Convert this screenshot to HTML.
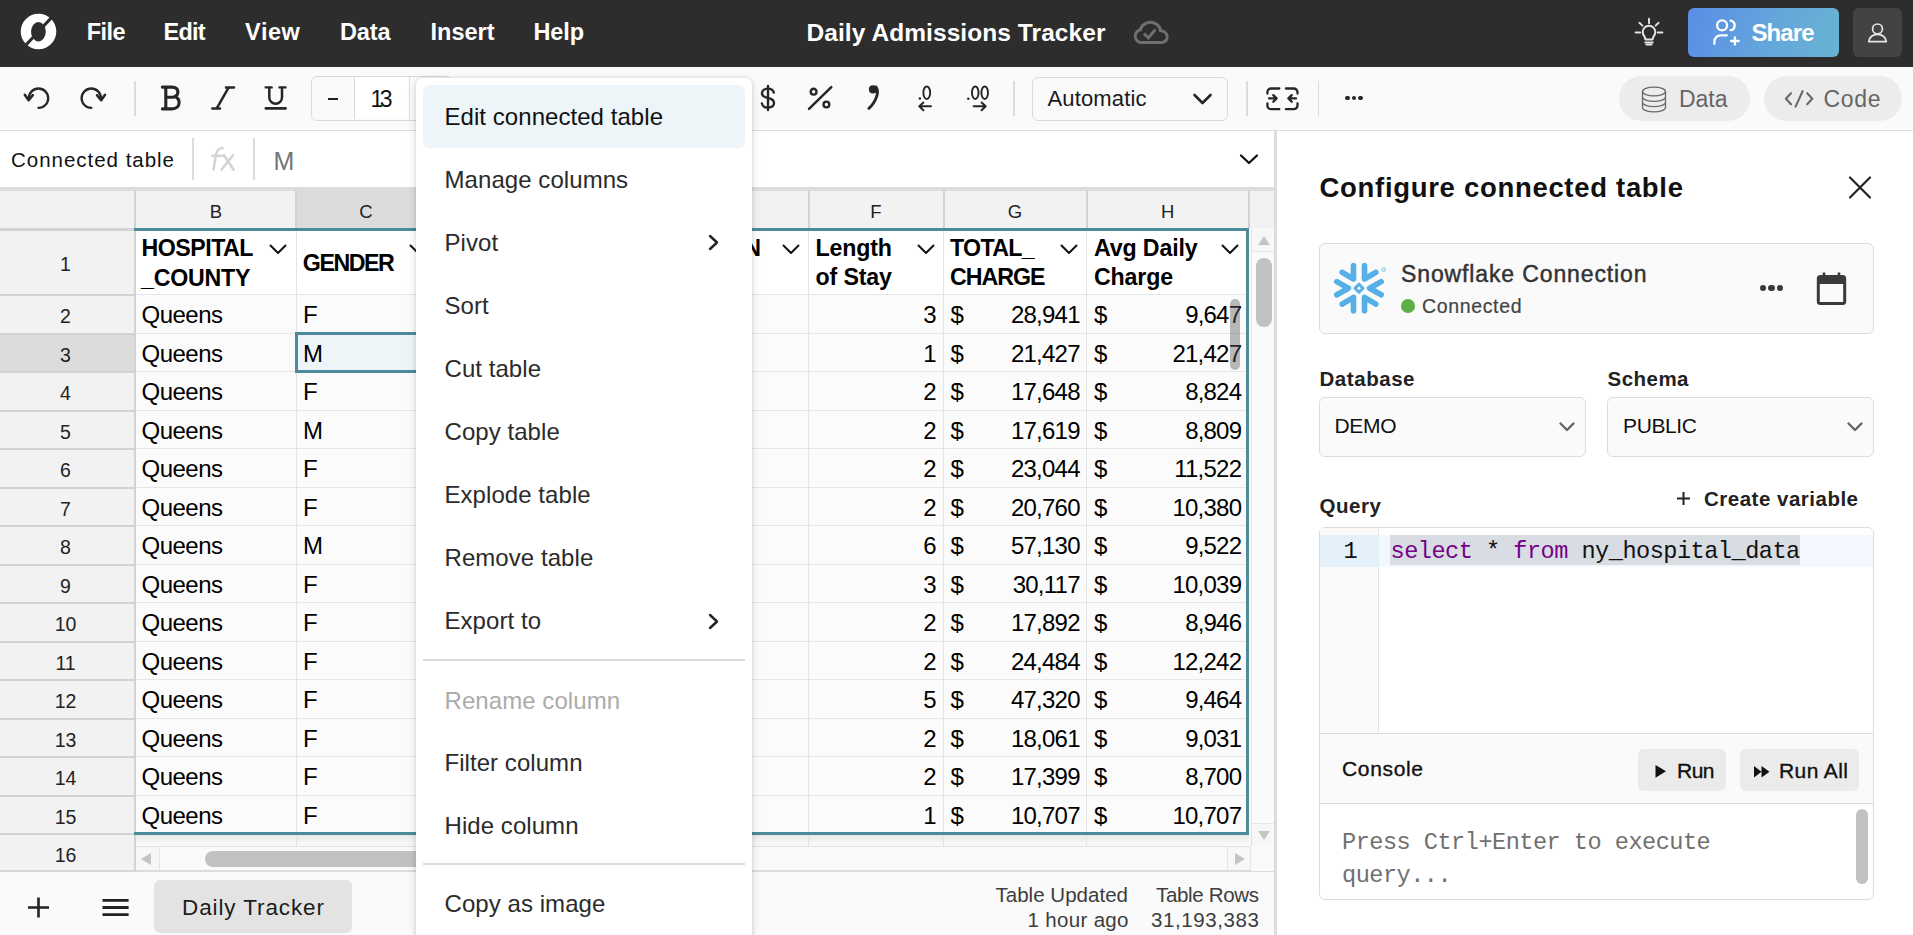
<!DOCTYPE html>
<html><head><meta charset="utf-8"><title>Daily Admissions Tracker</title>
<style>
html,body{margin:0;padding:0;}
body{width:1913px;height:935px;overflow:hidden;position:relative;background:#fff;font-family:"Liberation Sans", sans-serif;}
.r{position:absolute;display:block;}
.t{position:absolute;white-space:nowrap;}
</style></head><body>
<div class="r" style="left:0px;top:0px;width:1913px;height:67px;background:#2d2d2d;"></div>
<svg class="r" style="left:20px;top:13px;" width="37" height="37" viewBox="0 0 37 37" fill="none"><circle cx="18.5" cy="18.5" r="17.8" fill="#fff"/><ellipse cx="18.4" cy="18.75" rx="7.4" ry="9.7" fill="#2d2d2d"/><line x1="5" y1="33" x2="32.5" y2="3.5" stroke="#2d2d2d" stroke-width="3.2"/></svg>
<div class="t" style="left:86.80px;top:20.91px;font-size:23.5px;line-height:23.5px;font-family:'Liberation Sans', sans-serif;color:#fff;font-weight:bold;letter-spacing:-0.594px;">File</div>
<div class="t" style="left:163.50px;top:20.91px;font-size:23.5px;line-height:23.5px;font-family:'Liberation Sans', sans-serif;color:#fff;font-weight:bold;letter-spacing:-0.795px;">Edit</div>
<div class="t" style="left:245.10px;top:20.91px;font-size:23.5px;line-height:23.5px;font-family:'Liberation Sans', sans-serif;color:#fff;font-weight:bold;letter-spacing:0.557px;">View</div>
<div class="t" style="left:339.90px;top:20.91px;font-size:23.5px;line-height:23.5px;font-family:'Liberation Sans', sans-serif;color:#fff;font-weight:bold;letter-spacing:-0.113px;">Data</div>
<div class="t" style="left:430.50px;top:20.91px;font-size:23.5px;line-height:23.5px;font-family:'Liberation Sans', sans-serif;color:#fff;font-weight:bold;">Insert</div>
<div class="t" style="left:533.50px;top:20.91px;font-size:23.5px;line-height:23.5px;font-family:'Liberation Sans', sans-serif;color:#fff;font-weight:bold;letter-spacing:-0.142px;">Help</div>
<div class="t" style="left:806.50px;top:20.66px;font-size:24.5px;line-height:24.5px;font-family:'Liberation Sans', sans-serif;color:#fff;font-weight:bold;letter-spacing:0.073px;">Daily Admissions Tracker</div>
<svg class="r" style="left:1132px;top:19px;" width="38" height="28" viewBox="0 0 38 28" fill="none"><clipPath id="cclip"><rect x="0" y="0" width="38" height="25.1"/></clipPath><clipPath id="cclip2"><rect x="0" y="0" width="38" height="22.1"/></clipPath><g fill="#6f6f6f" clip-path="url(#cclip)"><circle cx="18.4" cy="13.9" r="12.1"/><circle cx="29.4" cy="17.8" r="7.3"/><circle cx="9.6" cy="17.2" r="7.9"/><rect x="9.6" y="17.2" width="19.8" height="7.9"/></g><g fill="#2d2d2d" clip-path="url(#cclip2)"><circle cx="18.4" cy="13.9" r="9.1"/><circle cx="29.4" cy="17.8" r="4.3"/><circle cx="9.6" cy="17.2" r="4.9"/><rect x="9.6" y="13" width="19.8" height="9.1"/></g><path d="M12 14.6 L16.3 18.9 L23.4 10.6" stroke="#6f6f6f" stroke-width="3"/></svg>
<svg class="r" style="left:1634px;top:17px;" width="30" height="30" viewBox="0 0 30 30" fill="none"><path d="M11.4 22.4 L10.55 19.55 A6.3 6.3 0 1 1 19.45 19.55 L18.6 22.4 Z" stroke="#e4e4e4" stroke-width="2" stroke-linejoin="round"/><path d="M11.2 25.5 H18.8 M12.4 27.7 H17.6" stroke="#e4e4e4" stroke-width="1.8" stroke-linecap="round"/><path d="M15 1.6 V6.2 M5.4 5.8 L8.4 8.6 M24.6 5.8 L21.6 8.6 M1.6 15.5 H6.3 M23.7 15.5 H28.4" stroke="#e4e4e4" stroke-width="1.9" stroke-linecap="round"/></svg>
<div class="r" style="left:1688px;top:8px;width:151px;height:49px;border-radius:6px;background:linear-gradient(110deg,#5a8de6 0%,#64a6db 55%,#67b4d2 100%);"></div>
<svg class="r" style="left:1712px;top:18px;" width="30" height="30" viewBox="0 0 30 30" fill="none"><circle cx="10.1" cy="7.4" r="4.95" stroke="#fff" stroke-width="2.3"/><path d="M18.7 2.6 a4.9 4.9 0 0 1 0 9.6" stroke="#fff" stroke-width="2.3" stroke-linecap="round"/><path d="M2.4 25.8 v-2.3 a6.2 6.2 0 0 1 6.2-6.2 h6.2" stroke="#fff" stroke-width="2.3" stroke-linecap="round"/><path d="M22.9 19.3 V26.7 M19.1 23 H26.7" stroke="#fff" stroke-width="2.3" stroke-linecap="round"/></svg>
<div class="t" style="left:1751.50px;top:20.58px;font-size:24px;line-height:24px;font-family:'Liberation Sans', sans-serif;color:#fff;font-weight:bold;letter-spacing:-0.926px;">Share</div>
<div class="r" style="left:1853px;top:8px;width:49px;height:49px;background:#434343;border-radius:6px;"></div>
<svg class="r" style="left:1866px;top:22px;" width="24" height="22" viewBox="0 0 24 22" fill="none"><circle cx="11.5" cy="6.9" r="4.9" stroke="#e6e6e6" stroke-width="1.7"/><path d="M2.7 19.6 c0.9-4.6 4.4-7.2 8.8-7.2 s7.9 2.6 8.8 7.2 z" stroke="#e6e6e6" stroke-width="1.7" stroke-linejoin="round"/></svg>
<div class="r" style="left:0px;top:67px;width:1913px;height:63px;background:#fafafa;"></div>
<div class="r" style="left:0px;top:130px;width:1913px;height:1px;background:#dedede;"></div>
<svg class="r" style="left:22px;top:85px;" width="30" height="26" viewBox="0 0 30 26" fill="none"><path d="M16.5 22.9 A9.7 9.7 0 1 0 6.8 13.2" stroke="#262626" stroke-width="2.3" stroke-linecap="round"/><path d="M2.8 9.8 L6.6 15.3 L10.8 10.1" stroke="#262626" stroke-width="2.5" stroke-linecap="round" stroke-linejoin="round"/></svg>
<svg class="r" style="left:78px;top:85px;" width="30" height="26" viewBox="0 0 30 26" fill="none"><path d="M13.3 22.9 A9.7 9.7 0 1 1 23 13.2" stroke="#262626" stroke-width="2.3" stroke-linecap="round"/><path d="M27 9.8 L23.2 15.3 L19 10.1" stroke="#262626" stroke-width="2.5" stroke-linecap="round" stroke-linejoin="round"/></svg>
<div class="r" style="left:134px;top:81px;width:2px;height:35px;background:#dcdcdc;"></div>
<svg class="r" style="left:158px;top:83px;" width="26" height="30" viewBox="0 0 26 30" fill="none"><path d="M4.4 4.1 H13.6 C17.6 4.1 19.9 6.1 19.9 9.1 C19.9 11.4 18.6 13 16.6 13.8 C19.3 14.4 21.1 16.5 21.1 19.6 C21.1 23.5 18.4 25.9 14 25.9 H4.4" stroke="#262626" stroke-width="3.1" stroke-linecap="round" stroke-linejoin="round"/><path d="M7.8 4.1 V25.9 M7.8 14.2 H16" stroke="#262626" stroke-width="3.1"/></svg>
<svg class="r" style="left:208px;top:83px;" width="30" height="30" viewBox="0 0 30 30" fill="none"><path d="M8.6 25.6 L20.7 4.4" stroke="#262626" stroke-width="2.5"/><path d="M18 4.4 H26 M4.3 25.6 H12" stroke="#262626" stroke-width="2.5" stroke-linecap="round"/></svg>
<svg class="r" style="left:261px;top:83px;" width="30" height="30" viewBox="0 0 30 30" fill="none"><path d="M8.3 4.4 V14.5 A6.35 6.35 0 0 0 21 14.5 V4.4" stroke="#262626" stroke-width="2.5"/><path d="M4.7 4.4 H10.7 M18.5 4.4 H24.5" stroke="#262626" stroke-width="2.4" stroke-linecap="round"/><path d="M4.9 25.4 H24.5" stroke="#262626" stroke-width="2.7" stroke-linecap="round"/></svg>
<div class="r" style="left:311px;top:76px;width:141px;height:45px;background:#fafafa;box-sizing:border-box;border:1px solid #dadada;border-radius:6px;"></div>
<div class="r" style="left:355px;top:77px;width:54px;height:42px;background:#ffffff;"></div>
<div class="r" style="left:354px;top:77px;width:1px;height:42px;background:#dadada;"></div>
<div class="r" style="left:409px;top:77px;width:1px;height:42px;background:#dadada;"></div>
<div class="r" style="left:328px;top:98px;width:10px;height:2.2px;background:#222;"></div>
<div class="t" style="left:370.50px;top:88.13px;font-size:23px;line-height:23px;font-family:'Liberation Sans', sans-serif;color:#111;letter-spacing:-3.584px;">13</div>
<svg class="r" style="left:758px;top:84px;" width="20" height="28" viewBox="0 0 20 28" fill="none"><path d="M15.8 8.6 C15.2 6 12.9 4.6 9.9 4.6 C6.4 4.6 4 6.5 4 9.3 C4 12.2 6.6 13.3 10 14 C13.6 14.7 16 15.9 16 19.1 C16 21.9 13.5 23.6 10 23.6 C6.6 23.6 4.3 22 3.9 19.4" stroke="#262626" stroke-width="2.4" stroke-linecap="round"/><path d="M10 2 V26" stroke="#262626" stroke-width="2.4" stroke-linecap="round"/></svg>
<svg class="r" style="left:805px;top:84px;" width="30" height="28" viewBox="0 0 30 28" fill="none"><path d="M4 24.8 L26.3 3.1" stroke="#262626" stroke-width="2.5" stroke-linecap="round"/><circle cx="8.6" cy="7.7" r="2.9" stroke="#262626" stroke-width="2.4"/><circle cx="21.4" cy="20.5" r="2.9" stroke="#262626" stroke-width="2.4"/></svg>
<svg class="r" style="left:864px;top:83px;" width="18" height="28" viewBox="0 0 18 28" fill="none"><circle cx="9" cy="6.4" r="4.1" fill="#262626"/><path d="M11.9 4 C13.8 6.5 13.9 9.8 12.6 13.6 C11.5 17 9.3 21.4 4.9 25.3" stroke="#262626" stroke-width="2.9" stroke-linecap="round"/></svg>
<svg class="r" style="left:915px;top:83px;" width="20" height="30" viewBox="0 0 20 30" fill="none"><circle cx="4.9" cy="15.6" r="1.25" fill="#262626"/><ellipse cx="11.75" cy="9.7" rx="3.4" ry="6.25" stroke="#262626" stroke-width="1.9"/><path d="M16 23.3 H4.6 M8.4 19.6 L4.3 23.3 L8.4 27.2" stroke="#262626" stroke-width="2" stroke-linecap="round" stroke-linejoin="round"/></svg>
<svg class="r" style="left:965px;top:83px;" width="26" height="30" viewBox="0 0 26 30" fill="none"><circle cx="3.3" cy="15.8" r="1.25" fill="#262626"/><ellipse cx="10.25" cy="9.7" rx="3.3" ry="6.25" stroke="#262626" stroke-width="1.9"/><ellipse cx="19.7" cy="9.7" rx="3.3" ry="6.25" stroke="#262626" stroke-width="1.9"/><path d="M8.7 23.3 H20.6 M16.6 19.6 L20.7 23.3 L16.6 27.2" stroke="#262626" stroke-width="2" stroke-linecap="round" stroke-linejoin="round"/></svg>
<div class="r" style="left:1013px;top:81px;width:2px;height:35px;background:#dcdcdc;"></div>
<div class="r" style="left:1032px;top:77px;width:196px;height:44px;background:#fafafa;box-sizing:border-box;border:1px solid #dadada;border-radius:6px;"></div>
<div class="t" style="left:1047.50px;top:87.98px;font-size:22px;line-height:22px;font-family:'Liberation Sans', sans-serif;color:#1a1a1a;letter-spacing:0.147px;">Automatic</div>
<svg class="r" style="left:1192px;top:92px;" width="21" height="14" viewBox="0 0 21 14" fill="none"><path d="M2.5 3 L10.5 11 L18.5 3" stroke="#262626" stroke-width="2.6" stroke-linecap="round" stroke-linejoin="round"/></svg>
<div class="r" style="left:1246px;top:81px;width:2px;height:35px;background:#dcdcdc;"></div>
<svg class="r" style="left:1264px;top:85px;" width="38" height="28" viewBox="0 0 38 28" fill="none"><path d="M15.3 3.5 H7.2 a3.8 3.8 0 0 0 -3.8 3.8 V8.5 M21.9 3.5 H29.7 a3.8 3.8 0 0 1 3.8 3.8 V8.5 M15.3 24.2 H7.2 a3.8 3.8 0 0 1 -3.8 -3.8 V18.3 M21.9 24.2 H29.7 a3.8 3.8 0 0 0 3.8 -3.8 V18.3" stroke="#262626" stroke-width="2.3" stroke-linecap="round"/><path d="M5 13.4 H12.6 M9.3 10.1 L12.6 13.4 L9.3 16.7 M32 13.4 H24.4 M27.7 10.1 L24.4 13.4 L27.7 16.7" stroke="#262626" stroke-width="2.3" stroke-linecap="round" stroke-linejoin="round"/></svg>
<div class="r" style="left:1318px;top:81px;width:1px;height:35px;background:#dcdcdc;"></div>
<div class="r" style="left:1345.2px;top:95.8px;width:4.6px;height:4.6px;background:#262626;border-radius:50%;"></div>
<div class="r" style="left:1351.8px;top:95.8px;width:4.6px;height:4.6px;background:#262626;border-radius:50%;"></div>
<div class="r" style="left:1358.4px;top:95.8px;width:4.6px;height:4.6px;background:#262626;border-radius:50%;"></div>
<div class="r" style="left:1619px;top:76px;width:131px;height:45px;background:#ececec;border-radius:23px;"></div>
<svg class="r" style="left:1640px;top:85.6px;" width="28" height="28" viewBox="0 0 28 28" fill="none"><ellipse cx="14" cy="5.5" rx="11.5" ry="4.3" stroke="#6a6a6a" stroke-width="1.3"/><path d="M2.5 5.5 V21.5 c0 2.4 5.1 4.3 11.5 4.3 s11.5-1.9 11.5-4.3 V5.5 M2.5 11 c0 2.4 5.1 4.3 11.5 4.3 s11.5-1.9 11.5-4.3 M2.5 16.3 c0 2.4 5.1 4.3 11.5 4.3 s11.5-1.9 11.5-4.3" stroke="#6a6a6a" stroke-width="1.3"/></svg>
<div class="t" style="left:1679.00px;top:87.93px;font-size:23px;line-height:23px;font-family:'Liberation Sans', sans-serif;color:#666;letter-spacing:-0.028px;">Data</div>
<div class="r" style="left:1764px;top:76px;width:138px;height:45px;background:#ececec;border-radius:23px;"></div>
<svg class="r" style="left:1783px;top:88px;" width="33" height="22" viewBox="0 0 33 22" fill="none"><path d="M8 5.2 L2.9 10.8 L8 16.3 M24.2 5.2 L29.3 10.8 L24.2 16.3 M19.6 3.2 L12.6 18.6" stroke="#6a6a6a" stroke-width="2.1" stroke-linecap="round" stroke-linejoin="round"/></svg>
<div class="t" style="left:1823.50px;top:87.93px;font-size:23px;line-height:23px;font-family:'Liberation Sans', sans-serif;color:#666;letter-spacing:0.671px;">Code</div>
<div class="r" style="left:0px;top:131px;width:1274px;height:56px;background:#ffffff;"></div>
<div class="t" style="left:11.00px;top:150.05px;font-size:20.5px;line-height:20.5px;font-family:'Liberation Sans', sans-serif;color:#111;letter-spacing:0.978px;">Connected table</div>
<div class="r" style="left:192px;top:138px;width:2px;height:42px;background:#dddddd;"></div>
<svg class="r" style="left:208px;top:144px;" width="30" height="30" viewBox="0 0 30 30" fill="none"><path d="M5.3 26.5 L8.1 10.2 C8.8 6 10.9 4 15.6 4" stroke="#d4d4d4" stroke-width="2.5"/><path d="M3.3 11.8 H16.3" stroke="#d4d4d4" stroke-width="2.5"/><path d="M12.8 26.5 L25.6 10.5 M15.4 10.5 L26.2 26.5" stroke="#d4d4d4" stroke-width="2.6"/></svg>
<div class="r" style="left:253px;top:138px;width:2px;height:42px;background:#dddddd;"></div>
<div class="t" style="left:273.50px;top:149.44px;font-size:25px;line-height:25px;font-family:'Liberation Sans', sans-serif;color:#747474;">M</div>
<svg class="r" style="left:1238px;top:152px;" width="22" height="15" viewBox="0 0 22 15" fill="none"><path d="M3 3.5 L11 11 L19 3.5" stroke="#111" stroke-width="2.3" stroke-linecap="round" stroke-linejoin="round"/></svg>
<div class="r" style="left:0px;top:187px;width:1274px;height:4px;background:#dcdcdc;"></div>
<div class="r" style="left:0px;top:191px;width:1274px;height:37px;background:#f2f2f2;"></div>
<div class="r" style="left:296px;top:191px;width:120px;height:37px;background:#dcdcdc;"></div>
<div class="r" style="left:134px;top:191px;width:2px;height:37px;background:#d2d2d2;"></div>
<div class="r" style="left:295px;top:191px;width:2px;height:37px;background:#d2d2d2;"></div>
<div class="r" style="left:808px;top:191px;width:2px;height:37px;background:#d2d2d2;"></div>
<div class="r" style="left:943px;top:191px;width:2px;height:37px;background:#d2d2d2;"></div>
<div class="r" style="left:1086px;top:191px;width:2px;height:37px;background:#d2d2d2;"></div>
<div class="r" style="left:1248px;top:191px;width:2px;height:37px;background:#d2d2d2;"></div>
<div class="t" style="left:209.83px;top:202.64px;font-size:18.5px;line-height:18.5px;font-family:'Liberation Sans', sans-serif;color:#222;">B</div>
<div class="t" style="left:359.32px;top:202.64px;font-size:18.5px;line-height:18.5px;font-family:'Liberation Sans', sans-serif;color:#222;">C</div>
<div class="t" style="left:870.35px;top:202.64px;font-size:18.5px;line-height:18.5px;font-family:'Liberation Sans', sans-serif;color:#222;">F</div>
<div class="t" style="left:1007.81px;top:202.64px;font-size:18.5px;line-height:18.5px;font-family:'Liberation Sans', sans-serif;color:#222;">G</div>
<div class="t" style="left:1160.92px;top:202.64px;font-size:18.5px;line-height:18.5px;font-family:'Liberation Sans', sans-serif;color:#222;">H</div>
<div class="r" style="left:0px;top:228px;width:134px;height:3px;background:#d4d4d4;"></div>
<div class="r" style="left:0px;top:231px;width:134px;height:64.0px;background:#f2f2f2;"></div>
<div class="r" style="left:0px;top:295.0px;width:134px;height:38.5px;background:#f2f2f2;"></div>
<div class="r" style="left:0px;top:333.5px;width:134px;height:38.5px;background:#dcdcdc;"></div>
<div class="r" style="left:0px;top:372.0px;width:134px;height:38.5px;background:#f2f2f2;"></div>
<div class="r" style="left:0px;top:410.5px;width:134px;height:38.5px;background:#f2f2f2;"></div>
<div class="r" style="left:0px;top:449.0px;width:134px;height:38.5px;background:#f2f2f2;"></div>
<div class="r" style="left:0px;top:487.5px;width:134px;height:38.5px;background:#f2f2f2;"></div>
<div class="r" style="left:0px;top:526.0px;width:134px;height:38.5px;background:#f2f2f2;"></div>
<div class="r" style="left:0px;top:564.5px;width:134px;height:38.5px;background:#f2f2f2;"></div>
<div class="r" style="left:0px;top:603.0px;width:134px;height:38.5px;background:#f2f2f2;"></div>
<div class="r" style="left:0px;top:641.5px;width:134px;height:38.5px;background:#f2f2f2;"></div>
<div class="r" style="left:0px;top:680.0px;width:134px;height:38.5px;background:#f2f2f2;"></div>
<div class="r" style="left:0px;top:718.5px;width:134px;height:38.5px;background:#f2f2f2;"></div>
<div class="r" style="left:0px;top:757.0px;width:134px;height:38.5px;background:#f2f2f2;"></div>
<div class="r" style="left:0px;top:795.5px;width:134px;height:38.5px;background:#f2f2f2;"></div>
<div class="r" style="left:0px;top:834.0px;width:134px;height:37.0px;background:#f2f2f2;"></div>
<div class="r" style="left:0px;top:294.0px;width:134px;height:2px;background:#d2d2d2;"></div>
<div class="r" style="left:0px;top:332.5px;width:134px;height:2px;background:#d2d2d2;"></div>
<div class="r" style="left:0px;top:371.0px;width:134px;height:2px;background:#d2d2d2;"></div>
<div class="r" style="left:0px;top:409.5px;width:134px;height:2px;background:#d2d2d2;"></div>
<div class="r" style="left:0px;top:448.0px;width:134px;height:2px;background:#d2d2d2;"></div>
<div class="r" style="left:0px;top:486.5px;width:134px;height:2px;background:#d2d2d2;"></div>
<div class="r" style="left:0px;top:525.0px;width:134px;height:2px;background:#d2d2d2;"></div>
<div class="r" style="left:0px;top:563.5px;width:134px;height:2px;background:#d2d2d2;"></div>
<div class="r" style="left:0px;top:602.0px;width:134px;height:2px;background:#d2d2d2;"></div>
<div class="r" style="left:0px;top:640.5px;width:134px;height:2px;background:#d2d2d2;"></div>
<div class="r" style="left:0px;top:679.0px;width:134px;height:2px;background:#d2d2d2;"></div>
<div class="r" style="left:0px;top:717.5px;width:134px;height:2px;background:#d2d2d2;"></div>
<div class="r" style="left:0px;top:756.0px;width:134px;height:2px;background:#d2d2d2;"></div>
<div class="r" style="left:0px;top:794.5px;width:134px;height:2px;background:#d2d2d2;"></div>
<div class="r" style="left:0px;top:833.0px;width:134px;height:2px;background:#d2d2d2;"></div>
<div class="r" style="left:134px;top:228px;width:2px;height:643px;background:#d2d2d2;"></div>
<div class="t" style="left:60.08px;top:254.89px;font-size:19.5px;line-height:19.5px;font-family:'Liberation Sans', sans-serif;color:#222;">1</div>
<div class="t" style="left:60.08px;top:307.29px;font-size:19.5px;line-height:19.5px;font-family:'Liberation Sans', sans-serif;color:#222;">2</div>
<div class="t" style="left:60.08px;top:345.79px;font-size:19.5px;line-height:19.5px;font-family:'Liberation Sans', sans-serif;color:#222;">3</div>
<div class="t" style="left:60.08px;top:384.29px;font-size:19.5px;line-height:19.5px;font-family:'Liberation Sans', sans-serif;color:#222;">4</div>
<div class="t" style="left:60.08px;top:422.79px;font-size:19.5px;line-height:19.5px;font-family:'Liberation Sans', sans-serif;color:#222;">5</div>
<div class="t" style="left:60.08px;top:461.29px;font-size:19.5px;line-height:19.5px;font-family:'Liberation Sans', sans-serif;color:#222;">6</div>
<div class="t" style="left:60.08px;top:499.79px;font-size:19.5px;line-height:19.5px;font-family:'Liberation Sans', sans-serif;color:#222;">7</div>
<div class="t" style="left:60.08px;top:538.29px;font-size:19.5px;line-height:19.5px;font-family:'Liberation Sans', sans-serif;color:#222;">8</div>
<div class="t" style="left:60.08px;top:576.79px;font-size:19.5px;line-height:19.5px;font-family:'Liberation Sans', sans-serif;color:#222;">9</div>
<div class="t" style="left:54.65px;top:615.29px;font-size:19.5px;line-height:19.5px;font-family:'Liberation Sans', sans-serif;color:#222;">10</div>
<div class="t" style="left:55.38px;top:653.79px;font-size:19.5px;line-height:19.5px;font-family:'Liberation Sans', sans-serif;color:#222;">11</div>
<div class="t" style="left:54.65px;top:692.29px;font-size:19.5px;line-height:19.5px;font-family:'Liberation Sans', sans-serif;color:#222;">12</div>
<div class="t" style="left:54.65px;top:730.79px;font-size:19.5px;line-height:19.5px;font-family:'Liberation Sans', sans-serif;color:#222;">13</div>
<div class="t" style="left:54.65px;top:769.29px;font-size:19.5px;line-height:19.5px;font-family:'Liberation Sans', sans-serif;color:#222;">14</div>
<div class="t" style="left:54.65px;top:807.79px;font-size:19.5px;line-height:19.5px;font-family:'Liberation Sans', sans-serif;color:#222;">15</div>
<div class="t" style="left:54.65px;top:846.29px;font-size:19.5px;line-height:19.5px;font-family:'Liberation Sans', sans-serif;color:#222;">16</div>
<div class="r" style="left:136px;top:231px;width:1113px;height:64px;background:#ffffff;"></div>
<div class="r" style="left:136px;top:295px;width:1113px;height:540px;background:#fbfbfb;"></div>
<div class="r" style="left:136px;top:835px;width:1115px;height:11px;background:linear-gradient(#e8e8e8,#f8f8f8 80%);"></div>
<div class="r" style="left:295.5px;top:835px;width:1px;height:11px;background:#dcdcdc;"></div>
<div class="r" style="left:808px;top:835px;width:1px;height:11px;background:#dcdcdc;"></div>
<div class="r" style="left:943px;top:835px;width:1px;height:11px;background:#dcdcdc;"></div>
<div class="r" style="left:1086px;top:835px;width:1px;height:11px;background:#dcdcdc;"></div>
<div class="r" style="left:136px;top:294px;width:1110px;height:1px;background:#e6e6e6;"></div>
<div class="r" style="left:136px;top:333px;width:1110px;height:1px;background:#e6e6e6;"></div>
<div class="r" style="left:136px;top:371px;width:1110px;height:1px;background:#e6e6e6;"></div>
<div class="r" style="left:136px;top:410px;width:1110px;height:1px;background:#e6e6e6;"></div>
<div class="r" style="left:136px;top:448px;width:1110px;height:1px;background:#e6e6e6;"></div>
<div class="r" style="left:136px;top:487px;width:1110px;height:1px;background:#e6e6e6;"></div>
<div class="r" style="left:136px;top:525px;width:1110px;height:1px;background:#e6e6e6;"></div>
<div class="r" style="left:136px;top:564px;width:1110px;height:1px;background:#e6e6e6;"></div>
<div class="r" style="left:136px;top:602px;width:1110px;height:1px;background:#e6e6e6;"></div>
<div class="r" style="left:136px;top:641px;width:1110px;height:1px;background:#e6e6e6;"></div>
<div class="r" style="left:136px;top:679px;width:1110px;height:1px;background:#e6e6e6;"></div>
<div class="r" style="left:136px;top:718px;width:1110px;height:1px;background:#e6e6e6;"></div>
<div class="r" style="left:136px;top:756px;width:1110px;height:1px;background:#e6e6e6;"></div>
<div class="r" style="left:136px;top:795px;width:1110px;height:1px;background:#e6e6e6;"></div>
<div class="r" style="left:295.5px;top:231px;width:1px;height:615px;background:#e4e4e4;"></div>
<div class="r" style="left:808px;top:231px;width:1px;height:615px;background:#e4e4e4;"></div>
<div class="r" style="left:943px;top:231px;width:1px;height:615px;background:#e4e4e4;"></div>
<div class="r" style="left:1086px;top:231px;width:1px;height:615px;background:#e4e4e4;"></div>
<div class="r" style="left:295px;top:332.3px;width:125px;height:40.6px;background:#edf5f8;box-sizing:border-box;border:3px solid #4d8a9b;border-right:none;"></div>
<div class="t" style="left:141.50px;top:236.86px;font-size:23.2px;line-height:23.2px;font-family:'Liberation Sans', sans-serif;color:#000;font-weight:bold;letter-spacing:-0.498px;">HOSPITAL</div>
<div class="t" style="left:141.00px;top:266.76px;font-size:23.2px;line-height:23.2px;font-family:'Liberation Sans', sans-serif;color:#000;font-weight:bold;letter-spacing:-0.227px;">_COUNTY</div>
<div class="t" style="left:302.80px;top:251.76px;font-size:23.2px;line-height:23.2px;font-family:'Liberation Sans', sans-serif;color:#000;font-weight:bold;letter-spacing:-1.452px;">GENDER</div>
<div class="t" style="left:720.20px;top:236.86px;font-size:23.2px;line-height:23.2px;font-family:'Liberation Sans', sans-serif;color:#000;font-weight:bold;letter-spacing:-0.222px;">ION</div>
<div class="t" style="left:815.50px;top:237.06px;font-size:23.2px;line-height:23.2px;font-family:'Liberation Sans', sans-serif;color:#000;font-weight:bold;letter-spacing:-0.167px;">Length</div>
<div class="t" style="left:815.50px;top:266.36px;font-size:23.2px;line-height:23.2px;font-family:'Liberation Sans', sans-serif;color:#000;font-weight:bold;letter-spacing:-0.139px;">of Stay</div>
<div class="t" style="left:950.00px;top:237.06px;font-size:23.2px;line-height:23.2px;font-family:'Liberation Sans', sans-serif;color:#000;font-weight:bold;letter-spacing:-0.690px;">TOTAL_</div>
<div class="t" style="left:950.00px;top:266.36px;font-size:23.2px;line-height:23.2px;font-family:'Liberation Sans', sans-serif;color:#000;font-weight:bold;letter-spacing:-1.008px;">CHARGE</div>
<div class="t" style="left:1094.00px;top:237.06px;font-size:23.2px;line-height:23.2px;font-family:'Liberation Sans', sans-serif;color:#000;font-weight:bold;letter-spacing:-0.141px;">Avg Daily</div>
<div class="t" style="left:1094.00px;top:266.36px;font-size:23.2px;line-height:23.2px;font-family:'Liberation Sans', sans-serif;color:#000;font-weight:bold;letter-spacing:-0.172px;">Charge</div>
<svg class="r" style="left:269px;top:243.5px;" width="18" height="11" viewBox="0 0 18 11" fill="none"><path d="M1.5 1.5 L9 9 L16.5 1.5" stroke="#111" stroke-width="2" stroke-linecap="round" stroke-linejoin="round"/></svg>
<svg class="r" style="left:409px;top:243.5px;" width="18" height="11" viewBox="0 0 18 11" fill="none"><path d="M1.5 1.5 L9 9 L16.5 1.5" stroke="#111" stroke-width="2" stroke-linecap="round" stroke-linejoin="round"/></svg>
<svg class="r" style="left:782px;top:243.5px;" width="18" height="11" viewBox="0 0 18 11" fill="none"><path d="M1.5 1.5 L9 9 L16.5 1.5" stroke="#111" stroke-width="2" stroke-linecap="round" stroke-linejoin="round"/></svg>
<svg class="r" style="left:916.5px;top:243.5px;" width="18" height="11" viewBox="0 0 18 11" fill="none"><path d="M1.5 1.5 L9 9 L16.5 1.5" stroke="#111" stroke-width="2" stroke-linecap="round" stroke-linejoin="round"/></svg>
<svg class="r" style="left:1060px;top:243.5px;" width="18" height="11" viewBox="0 0 18 11" fill="none"><path d="M1.5 1.5 L9 9 L16.5 1.5" stroke="#111" stroke-width="2" stroke-linecap="round" stroke-linejoin="round"/></svg>
<svg class="r" style="left:1221px;top:243.5px;" width="18" height="11" viewBox="0 0 18 11" fill="none"><path d="M1.5 1.5 L9 9 L16.5 1.5" stroke="#111" stroke-width="2" stroke-linecap="round" stroke-linejoin="round"/></svg>
<div class="t" style="left:141.50px;top:303.38px;font-size:24px;line-height:24px;font-family:'Liberation Sans', sans-serif;color:#000;letter-spacing:-0.499px;">Queens</div>
<div class="t" style="left:303.00px;top:303.38px;font-size:24px;line-height:24px;font-family:'Liberation Sans', sans-serif;color:#000;">F</div>
<div class="t" style="left:923.15px;top:303.38px;font-size:24px;line-height:24px;font-family:'Liberation Sans', sans-serif;color:#000;">3</div>
<div class="t" style="left:950.50px;top:303.38px;font-size:24px;line-height:24px;font-family:'Liberation Sans', sans-serif;color:#000;">$</div>
<div class="t" style="left:1010.99px;top:303.38px;font-size:24px;line-height:24px;font-family:'Liberation Sans', sans-serif;color:#000;letter-spacing:-0.780px;">28,941</div>
<div class="t" style="left:1094.00px;top:303.38px;font-size:24px;line-height:24px;font-family:'Liberation Sans', sans-serif;color:#000;">$</div>
<div class="t" style="left:1185.13px;top:303.38px;font-size:24px;line-height:24px;font-family:'Liberation Sans', sans-serif;color:#000;letter-spacing:-0.798px;">9,647</div>
<div class="t" style="left:141.50px;top:341.88px;font-size:24px;line-height:24px;font-family:'Liberation Sans', sans-serif;color:#000;letter-spacing:-0.499px;">Queens</div>
<div class="t" style="left:303.00px;top:341.88px;font-size:24px;line-height:24px;font-family:'Liberation Sans', sans-serif;color:#000;">M</div>
<div class="t" style="left:923.15px;top:341.88px;font-size:24px;line-height:24px;font-family:'Liberation Sans', sans-serif;color:#000;">1</div>
<div class="t" style="left:950.50px;top:341.88px;font-size:24px;line-height:24px;font-family:'Liberation Sans', sans-serif;color:#000;">$</div>
<div class="t" style="left:1010.99px;top:341.88px;font-size:24px;line-height:24px;font-family:'Liberation Sans', sans-serif;color:#000;letter-spacing:-0.780px;">21,427</div>
<div class="t" style="left:1094.00px;top:341.88px;font-size:24px;line-height:24px;font-family:'Liberation Sans', sans-serif;color:#000;">$</div>
<div class="t" style="left:1172.49px;top:341.88px;font-size:24px;line-height:24px;font-family:'Liberation Sans', sans-serif;color:#000;letter-spacing:-0.780px;">21,427</div>
<div class="t" style="left:141.50px;top:380.38px;font-size:24px;line-height:24px;font-family:'Liberation Sans', sans-serif;color:#000;letter-spacing:-0.499px;">Queens</div>
<div class="t" style="left:303.00px;top:380.38px;font-size:24px;line-height:24px;font-family:'Liberation Sans', sans-serif;color:#000;">F</div>
<div class="t" style="left:923.15px;top:380.38px;font-size:24px;line-height:24px;font-family:'Liberation Sans', sans-serif;color:#000;">2</div>
<div class="t" style="left:950.50px;top:380.38px;font-size:24px;line-height:24px;font-family:'Liberation Sans', sans-serif;color:#000;">$</div>
<div class="t" style="left:1010.99px;top:380.38px;font-size:24px;line-height:24px;font-family:'Liberation Sans', sans-serif;color:#000;letter-spacing:-0.780px;">17,648</div>
<div class="t" style="left:1094.00px;top:380.38px;font-size:24px;line-height:24px;font-family:'Liberation Sans', sans-serif;color:#000;">$</div>
<div class="t" style="left:1185.13px;top:380.38px;font-size:24px;line-height:24px;font-family:'Liberation Sans', sans-serif;color:#000;letter-spacing:-0.798px;">8,824</div>
<div class="t" style="left:141.50px;top:418.88px;font-size:24px;line-height:24px;font-family:'Liberation Sans', sans-serif;color:#000;letter-spacing:-0.499px;">Queens</div>
<div class="t" style="left:303.00px;top:418.88px;font-size:24px;line-height:24px;font-family:'Liberation Sans', sans-serif;color:#000;">M</div>
<div class="t" style="left:923.15px;top:418.88px;font-size:24px;line-height:24px;font-family:'Liberation Sans', sans-serif;color:#000;">2</div>
<div class="t" style="left:950.50px;top:418.88px;font-size:24px;line-height:24px;font-family:'Liberation Sans', sans-serif;color:#000;">$</div>
<div class="t" style="left:1010.99px;top:418.88px;font-size:24px;line-height:24px;font-family:'Liberation Sans', sans-serif;color:#000;letter-spacing:-0.780px;">17,619</div>
<div class="t" style="left:1094.00px;top:418.88px;font-size:24px;line-height:24px;font-family:'Liberation Sans', sans-serif;color:#000;">$</div>
<div class="t" style="left:1185.13px;top:418.88px;font-size:24px;line-height:24px;font-family:'Liberation Sans', sans-serif;color:#000;letter-spacing:-0.798px;">8,809</div>
<div class="t" style="left:141.50px;top:457.38px;font-size:24px;line-height:24px;font-family:'Liberation Sans', sans-serif;color:#000;letter-spacing:-0.499px;">Queens</div>
<div class="t" style="left:303.00px;top:457.38px;font-size:24px;line-height:24px;font-family:'Liberation Sans', sans-serif;color:#000;">F</div>
<div class="t" style="left:923.15px;top:457.38px;font-size:24px;line-height:24px;font-family:'Liberation Sans', sans-serif;color:#000;">2</div>
<div class="t" style="left:950.50px;top:457.38px;font-size:24px;line-height:24px;font-family:'Liberation Sans', sans-serif;color:#000;">$</div>
<div class="t" style="left:1010.99px;top:457.38px;font-size:24px;line-height:24px;font-family:'Liberation Sans', sans-serif;color:#000;letter-spacing:-0.780px;">23,044</div>
<div class="t" style="left:1094.00px;top:457.38px;font-size:24px;line-height:24px;font-family:'Liberation Sans', sans-serif;color:#000;">$</div>
<div class="t" style="left:1174.18px;top:457.38px;font-size:24px;line-height:24px;font-family:'Liberation Sans', sans-serif;color:#000;letter-spacing:-0.761px;">11,522</div>
<div class="t" style="left:141.50px;top:495.88px;font-size:24px;line-height:24px;font-family:'Liberation Sans', sans-serif;color:#000;letter-spacing:-0.499px;">Queens</div>
<div class="t" style="left:303.00px;top:495.88px;font-size:24px;line-height:24px;font-family:'Liberation Sans', sans-serif;color:#000;">F</div>
<div class="t" style="left:923.15px;top:495.88px;font-size:24px;line-height:24px;font-family:'Liberation Sans', sans-serif;color:#000;">2</div>
<div class="t" style="left:950.50px;top:495.88px;font-size:24px;line-height:24px;font-family:'Liberation Sans', sans-serif;color:#000;">$</div>
<div class="t" style="left:1010.99px;top:495.88px;font-size:24px;line-height:24px;font-family:'Liberation Sans', sans-serif;color:#000;letter-spacing:-0.780px;">20,760</div>
<div class="t" style="left:1094.00px;top:495.88px;font-size:24px;line-height:24px;font-family:'Liberation Sans', sans-serif;color:#000;">$</div>
<div class="t" style="left:1172.49px;top:495.88px;font-size:24px;line-height:24px;font-family:'Liberation Sans', sans-serif;color:#000;letter-spacing:-0.780px;">10,380</div>
<div class="t" style="left:141.50px;top:534.38px;font-size:24px;line-height:24px;font-family:'Liberation Sans', sans-serif;color:#000;letter-spacing:-0.499px;">Queens</div>
<div class="t" style="left:303.00px;top:534.38px;font-size:24px;line-height:24px;font-family:'Liberation Sans', sans-serif;color:#000;">M</div>
<div class="t" style="left:923.15px;top:534.38px;font-size:24px;line-height:24px;font-family:'Liberation Sans', sans-serif;color:#000;">6</div>
<div class="t" style="left:950.50px;top:534.38px;font-size:24px;line-height:24px;font-family:'Liberation Sans', sans-serif;color:#000;">$</div>
<div class="t" style="left:1010.99px;top:534.38px;font-size:24px;line-height:24px;font-family:'Liberation Sans', sans-serif;color:#000;letter-spacing:-0.780px;">57,130</div>
<div class="t" style="left:1094.00px;top:534.38px;font-size:24px;line-height:24px;font-family:'Liberation Sans', sans-serif;color:#000;">$</div>
<div class="t" style="left:1185.13px;top:534.38px;font-size:24px;line-height:24px;font-family:'Liberation Sans', sans-serif;color:#000;letter-spacing:-0.798px;">9,522</div>
<div class="t" style="left:141.50px;top:572.88px;font-size:24px;line-height:24px;font-family:'Liberation Sans', sans-serif;color:#000;letter-spacing:-0.499px;">Queens</div>
<div class="t" style="left:303.00px;top:572.88px;font-size:24px;line-height:24px;font-family:'Liberation Sans', sans-serif;color:#000;">F</div>
<div class="t" style="left:923.15px;top:572.88px;font-size:24px;line-height:24px;font-family:'Liberation Sans', sans-serif;color:#000;">3</div>
<div class="t" style="left:950.50px;top:572.88px;font-size:24px;line-height:24px;font-family:'Liberation Sans', sans-serif;color:#000;">$</div>
<div class="t" style="left:1012.68px;top:572.88px;font-size:24px;line-height:24px;font-family:'Liberation Sans', sans-serif;color:#000;letter-spacing:-0.761px;">30,117</div>
<div class="t" style="left:1094.00px;top:572.88px;font-size:24px;line-height:24px;font-family:'Liberation Sans', sans-serif;color:#000;">$</div>
<div class="t" style="left:1172.49px;top:572.88px;font-size:24px;line-height:24px;font-family:'Liberation Sans', sans-serif;color:#000;letter-spacing:-0.780px;">10,039</div>
<div class="t" style="left:141.50px;top:611.38px;font-size:24px;line-height:24px;font-family:'Liberation Sans', sans-serif;color:#000;letter-spacing:-0.499px;">Queens</div>
<div class="t" style="left:303.00px;top:611.38px;font-size:24px;line-height:24px;font-family:'Liberation Sans', sans-serif;color:#000;">F</div>
<div class="t" style="left:923.15px;top:611.38px;font-size:24px;line-height:24px;font-family:'Liberation Sans', sans-serif;color:#000;">2</div>
<div class="t" style="left:950.50px;top:611.38px;font-size:24px;line-height:24px;font-family:'Liberation Sans', sans-serif;color:#000;">$</div>
<div class="t" style="left:1010.99px;top:611.38px;font-size:24px;line-height:24px;font-family:'Liberation Sans', sans-serif;color:#000;letter-spacing:-0.780px;">17,892</div>
<div class="t" style="left:1094.00px;top:611.38px;font-size:24px;line-height:24px;font-family:'Liberation Sans', sans-serif;color:#000;">$</div>
<div class="t" style="left:1185.13px;top:611.38px;font-size:24px;line-height:24px;font-family:'Liberation Sans', sans-serif;color:#000;letter-spacing:-0.798px;">8,946</div>
<div class="t" style="left:141.50px;top:649.88px;font-size:24px;line-height:24px;font-family:'Liberation Sans', sans-serif;color:#000;letter-spacing:-0.499px;">Queens</div>
<div class="t" style="left:303.00px;top:649.88px;font-size:24px;line-height:24px;font-family:'Liberation Sans', sans-serif;color:#000;">F</div>
<div class="t" style="left:923.15px;top:649.88px;font-size:24px;line-height:24px;font-family:'Liberation Sans', sans-serif;color:#000;">2</div>
<div class="t" style="left:950.50px;top:649.88px;font-size:24px;line-height:24px;font-family:'Liberation Sans', sans-serif;color:#000;">$</div>
<div class="t" style="left:1010.99px;top:649.88px;font-size:24px;line-height:24px;font-family:'Liberation Sans', sans-serif;color:#000;letter-spacing:-0.780px;">24,484</div>
<div class="t" style="left:1094.00px;top:649.88px;font-size:24px;line-height:24px;font-family:'Liberation Sans', sans-serif;color:#000;">$</div>
<div class="t" style="left:1172.49px;top:649.88px;font-size:24px;line-height:24px;font-family:'Liberation Sans', sans-serif;color:#000;letter-spacing:-0.780px;">12,242</div>
<div class="t" style="left:141.50px;top:688.38px;font-size:24px;line-height:24px;font-family:'Liberation Sans', sans-serif;color:#000;letter-spacing:-0.499px;">Queens</div>
<div class="t" style="left:303.00px;top:688.38px;font-size:24px;line-height:24px;font-family:'Liberation Sans', sans-serif;color:#000;">F</div>
<div class="t" style="left:923.15px;top:688.38px;font-size:24px;line-height:24px;font-family:'Liberation Sans', sans-serif;color:#000;">5</div>
<div class="t" style="left:950.50px;top:688.38px;font-size:24px;line-height:24px;font-family:'Liberation Sans', sans-serif;color:#000;">$</div>
<div class="t" style="left:1010.99px;top:688.38px;font-size:24px;line-height:24px;font-family:'Liberation Sans', sans-serif;color:#000;letter-spacing:-0.780px;">47,320</div>
<div class="t" style="left:1094.00px;top:688.38px;font-size:24px;line-height:24px;font-family:'Liberation Sans', sans-serif;color:#000;">$</div>
<div class="t" style="left:1185.13px;top:688.38px;font-size:24px;line-height:24px;font-family:'Liberation Sans', sans-serif;color:#000;letter-spacing:-0.798px;">9,464</div>
<div class="t" style="left:141.50px;top:726.88px;font-size:24px;line-height:24px;font-family:'Liberation Sans', sans-serif;color:#000;letter-spacing:-0.499px;">Queens</div>
<div class="t" style="left:303.00px;top:726.88px;font-size:24px;line-height:24px;font-family:'Liberation Sans', sans-serif;color:#000;">F</div>
<div class="t" style="left:923.15px;top:726.88px;font-size:24px;line-height:24px;font-family:'Liberation Sans', sans-serif;color:#000;">2</div>
<div class="t" style="left:950.50px;top:726.88px;font-size:24px;line-height:24px;font-family:'Liberation Sans', sans-serif;color:#000;">$</div>
<div class="t" style="left:1010.99px;top:726.88px;font-size:24px;line-height:24px;font-family:'Liberation Sans', sans-serif;color:#000;letter-spacing:-0.780px;">18,061</div>
<div class="t" style="left:1094.00px;top:726.88px;font-size:24px;line-height:24px;font-family:'Liberation Sans', sans-serif;color:#000;">$</div>
<div class="t" style="left:1185.13px;top:726.88px;font-size:24px;line-height:24px;font-family:'Liberation Sans', sans-serif;color:#000;letter-spacing:-0.798px;">9,031</div>
<div class="t" style="left:141.50px;top:765.38px;font-size:24px;line-height:24px;font-family:'Liberation Sans', sans-serif;color:#000;letter-spacing:-0.499px;">Queens</div>
<div class="t" style="left:303.00px;top:765.38px;font-size:24px;line-height:24px;font-family:'Liberation Sans', sans-serif;color:#000;">F</div>
<div class="t" style="left:923.15px;top:765.38px;font-size:24px;line-height:24px;font-family:'Liberation Sans', sans-serif;color:#000;">2</div>
<div class="t" style="left:950.50px;top:765.38px;font-size:24px;line-height:24px;font-family:'Liberation Sans', sans-serif;color:#000;">$</div>
<div class="t" style="left:1010.99px;top:765.38px;font-size:24px;line-height:24px;font-family:'Liberation Sans', sans-serif;color:#000;letter-spacing:-0.780px;">17,399</div>
<div class="t" style="left:1094.00px;top:765.38px;font-size:24px;line-height:24px;font-family:'Liberation Sans', sans-serif;color:#000;">$</div>
<div class="t" style="left:1185.13px;top:765.38px;font-size:24px;line-height:24px;font-family:'Liberation Sans', sans-serif;color:#000;letter-spacing:-0.798px;">8,700</div>
<div class="t" style="left:141.50px;top:803.88px;font-size:24px;line-height:24px;font-family:'Liberation Sans', sans-serif;color:#000;letter-spacing:-0.499px;">Queens</div>
<div class="t" style="left:303.00px;top:803.88px;font-size:24px;line-height:24px;font-family:'Liberation Sans', sans-serif;color:#000;">F</div>
<div class="t" style="left:923.15px;top:803.88px;font-size:24px;line-height:24px;font-family:'Liberation Sans', sans-serif;color:#000;">1</div>
<div class="t" style="left:950.50px;top:803.88px;font-size:24px;line-height:24px;font-family:'Liberation Sans', sans-serif;color:#000;">$</div>
<div class="t" style="left:1010.99px;top:803.88px;font-size:24px;line-height:24px;font-family:'Liberation Sans', sans-serif;color:#000;letter-spacing:-0.780px;">10,707</div>
<div class="t" style="left:1094.00px;top:803.88px;font-size:24px;line-height:24px;font-family:'Liberation Sans', sans-serif;color:#000;">$</div>
<div class="t" style="left:1172.49px;top:803.88px;font-size:24px;line-height:24px;font-family:'Liberation Sans', sans-serif;color:#000;letter-spacing:-0.780px;">10,707</div>
<div class="r" style="left:134px;top:228px;width:1115px;height:3px;background:#4d8a9b;"></div>
<div class="r" style="left:1246px;top:228px;width:3px;height:607px;background:#4d8a9b;"></div>
<div class="r" style="left:134px;top:832px;width:1115px;height:3px;background:#4d8a9b;"></div>
<div class="r" style="left:1230px;top:299px;width:10px;height:70.5px;background:rgba(90,90,90,0.42);border-radius:5px;"></div>
<div class="r" style="left:1249px;top:228px;width:25px;height:618px;background:#fafafa;"></div>
<div class="r" style="left:1251px;top:228px;width:1px;height:618px;background:#e2e2e2;"></div>
<div class="r" style="left:1252px;top:229px;width:22px;height:23px;background:#f7f7f7;box-sizing:border-box;border-bottom:1px solid #e6e6e6;"></div>
<svg class="r" style="left:1257px;top:235px;" width="14" height="11" viewBox="0 0 14 11" fill="none"><path d="M7 1 L13 10 H1 Z" fill="#c4c4c4"/></svg>
<div class="r" style="left:1256px;top:257.8px;width:16px;height:69px;background:#c1c1c1;border-radius:8px;"></div>
<div class="r" style="left:1252px;top:823px;width:22px;height:23px;background:#f7f7f7;box-sizing:border-box;border-top:1px solid #e6e6e6;"></div>
<svg class="r" style="left:1257px;top:830px;" width="14" height="11" viewBox="0 0 14 11" fill="none"><path d="M1 1 H13 L7 10 Z" fill="#c4c4c4"/></svg>
<div class="r" style="left:136px;top:846px;width:1115px;height:25px;background:#fafafa;"></div>
<div class="r" style="left:136px;top:846px;width:1115px;height:1px;background:#e2e2e2;"></div>
<div class="r" style="left:136px;top:870px;width:1138px;height:2px;background:#dcdcdc;"></div>
<div class="r" style="left:136px;top:847px;width:24px;height:23px;background:#f7f7f7;box-sizing:border-box;border-right:1px solid #e6e6e6;"></div>
<svg class="r" style="left:140px;top:852px;" width="14" height="14" viewBox="0 0 14 14" fill="none"><path d="M1 7 L11 1 V13 Z" fill="#c4c4c4"/></svg>
<div class="r" style="left:204.5px;top:851px;width:540px;height:15.5px;background:#c1c1c1;border-radius:8px;"></div>
<div class="r" style="left:1227px;top:847px;width:24px;height:23px;background:#f7f7f7;box-sizing:border-box;border-left:1px solid #e6e6e6;border-right:1px solid #e6e6e6;"></div>
<svg class="r" style="left:1233px;top:852px;" width="14" height="14" viewBox="0 0 14 14" fill="none"><path d="M2 1 L12 7 L2 13 Z" fill="#c4c4c4"/></svg>
<div class="r" style="left:1251px;top:846px;width:23px;height:25px;background:#fafafa;"></div>
<div class="r" style="left:0px;top:872px;width:1274px;height:63px;background:#fafafa;"></div>
<div class="r" style="left:0px;top:870px;width:136px;height:2px;background:#d6d6d6;"></div>
<svg class="r" style="left:26px;top:896px;" width="25" height="23" viewBox="0 0 25 23" fill="none"><path d="M12.5 1.5 V21.5 M2 11.5 H23" stroke="#222" stroke-width="2.6"/></svg>
<svg class="r" style="left:101px;top:897px;" width="30" height="21" viewBox="0 0 30 21" fill="none"><path d="M1.5 3.4 H27.6 M1.5 10.5 H27.6 M1.5 17.6 H27.6" stroke="#222" stroke-width="2.8"/></svg>
<div class="r" style="left:154px;top:880px;width:198px;height:53px;background:#e3e3e3;border-radius:6px;"></div>
<div class="t" style="left:182.00px;top:896.75px;font-size:22.5px;line-height:22.5px;font-family:'Liberation Sans', sans-serif;color:#1c1c1c;letter-spacing:0.893px;">Daily Tracker</div>
<div class="t" style="left:995.50px;top:884.55px;font-size:20.5px;line-height:20.5px;font-family:'Liberation Sans', sans-serif;color:#3d3d3d;letter-spacing:0.024px;">Table Updated</div>
<div class="t" style="left:1027.53px;top:910.25px;font-size:20.5px;line-height:20.5px;font-family:'Liberation Sans', sans-serif;color:#3d3d3d;letter-spacing:0.327px;">1 hour ago</div>
<div class="t" style="left:1156.00px;top:884.55px;font-size:20.5px;line-height:20.5px;font-family:'Liberation Sans', sans-serif;color:#3d3d3d;letter-spacing:-0.330px;">Table Rows</div>
<div class="t" style="left:1151.00px;top:910.25px;font-size:20.5px;line-height:20.5px;font-family:'Liberation Sans', sans-serif;color:#3d3d3d;letter-spacing:0.600px;">31,193,383</div>
<div class="r" style="left:1274px;top:131px;width:3px;height:804px;background:#dcdcdc;"></div>
<div class="r" style="left:1277px;top:131px;width:636px;height:804px;background:#ffffff;"></div>
<div class="t" style="left:1319.50px;top:174.02px;font-size:27.5px;line-height:27.5px;font-family:'Liberation Sans', sans-serif;color:#111;font-weight:bold;letter-spacing:0.694px;">Configure connected table</div>
<svg class="r" style="left:1847px;top:175px;" width="26" height="25" viewBox="0 0 26 25" fill="none"><path d="M3 2.5 L23 22.5 M23 2.5 L3 22.5" stroke="#222" stroke-width="2.2" stroke-linecap="round"/></svg>
<div class="r" style="left:1319px;top:243px;width:555px;height:91px;background:#fafafa;box-sizing:border-box;border:1px solid #dcdcdc;border-radius:6px;"></div>
<svg class="r" style="left:1333px;top:263px;" width="56" height="51" viewBox="0 0 56 51" fill="none"><g transform="translate(26,25.2)" stroke="#55b0e7" stroke-width="5.6" stroke-linecap="round" stroke-linejoin="round"><path d="M-5.5 -22.6 V-9.2 L-16.8 -15.9"/><path d="M5.5 -22.6 V-9.2 L16.8 -15.9"/><path d="M-5.5 22.6 V9.2 L-16.8 15.9"/><path d="M5.5 22.6 V9.2 L16.8 15.9"/><path d="M-22.2 -6.6 L-10.6 0 L-22.2 6.6"/><path d="M22.2 -6.6 L10.6 0 L22.2 6.6"/><path d="M0 -4 L4 0 L0 4 L-4 0 Z" stroke-width="3"/></g><circle cx="50.7" cy="6.6" r="1.7" stroke="#55b0e7" stroke-width="0.9"/></svg>
<div class="t" style="left:1401.00px;top:263.03px;font-size:23px;line-height:23px;font-family:'Liberation Sans', sans-serif;color:#333;letter-spacing:0.875px;-webkit-text-stroke:0.45px #333;">Snowflake Connection</div>
<div class="r" style="left:1401px;top:299px;width:14px;height:14px;background:#5cb046;border-radius:50%;"></div>
<div class="t" style="left:1422.00px;top:296.89px;font-size:19.5px;line-height:19.5px;font-family:'Liberation Sans', sans-serif;color:#444;letter-spacing:0.647px;-webkit-text-stroke:0.2px #444;">Connected</div>
<div class="r" style="left:1759.8px;top:285px;width:6.4px;height:6.4px;background:#3a3a3a;border-radius:50%;"></div>
<div class="r" style="left:1768.3px;top:285px;width:6.4px;height:6.4px;background:#3a3a3a;border-radius:50%;"></div>
<div class="r" style="left:1776.8px;top:285px;width:6.4px;height:6.4px;background:#3a3a3a;border-radius:50%;"></div>
<svg class="r" style="left:1815px;top:270px;" width="33" height="36" viewBox="0 0 33 36" fill="none"><rect x="3.3" y="6.5" width="26.4" height="27" rx="2" stroke="#3a3a3a" stroke-width="3"/><rect x="3.3" y="6.5" width="26.4" height="7.5" fill="#3a3a3a"/><path d="M9 2.5 V7 M24 2.5 V7" stroke="#3a3a3a" stroke-width="2.6"/></svg>
<div class="t" style="left:1319.50px;top:369.15px;font-size:20.5px;line-height:20.5px;font-family:'Liberation Sans', sans-serif;color:#222;font-weight:bold;letter-spacing:0.548px;">Database</div>
<div class="r" style="left:1319px;top:397px;width:267px;height:59.5px;background:#fafafa;box-sizing:border-box;border:1px solid #dcdcdc;border-radius:6px;"></div>
<div class="t" style="left:1334.50px;top:415.32px;font-size:21px;line-height:21px;font-family:'Liberation Sans', sans-serif;color:#111;letter-spacing:-0.334px;">DEMO</div>
<svg class="r" style="left:1558px;top:421px;" width="18" height="12" viewBox="0 0 18 12" fill="none"><path d="M2.5 2.5 L9 9 L15.5 2.5" stroke="#666" stroke-width="2.4" stroke-linecap="round" stroke-linejoin="round"/></svg>
<div class="t" style="left:1607.50px;top:369.15px;font-size:20.5px;line-height:20.5px;font-family:'Liberation Sans', sans-serif;color:#222;font-weight:bold;letter-spacing:0.474px;">Schema</div>
<div class="r" style="left:1607px;top:397px;width:267px;height:59.5px;background:#fafafa;box-sizing:border-box;border:1px solid #dcdcdc;border-radius:6px;"></div>
<div class="t" style="left:1623.00px;top:415.32px;font-size:21px;line-height:21px;font-family:'Liberation Sans', sans-serif;color:#111;letter-spacing:-0.372px;">PUBLIC</div>
<svg class="r" style="left:1846px;top:421px;" width="18" height="12" viewBox="0 0 18 12" fill="none"><path d="M2.5 2.5 L9 9 L15.5 2.5" stroke="#666" stroke-width="2.4" stroke-linecap="round" stroke-linejoin="round"/></svg>
<div class="t" style="left:1319.50px;top:496.35px;font-size:20.5px;line-height:20.5px;font-family:'Liberation Sans', sans-serif;color:#222;font-weight:bold;letter-spacing:0.563px;">Query</div>
<svg class="r" style="left:1675px;top:490px;" width="17" height="17" viewBox="0 0 17 17" fill="none"><path d="M8.5 2 V15 M2 8.5 H15" stroke="#222" stroke-width="2"/></svg>
<div class="t" style="left:1704.00px;top:488.85px;font-size:20.5px;line-height:20.5px;font-family:'Liberation Sans', sans-serif;color:#222;font-weight:bold;letter-spacing:0.500px;">Create variable</div>
<div class="r" style="left:1319px;top:527px;width:555px;height:373px;background:#ffffff;box-sizing:border-box;border:1px solid #dcdcdc;border-radius:6px;overflow:hidden;"></div>
<div class="r" style="left:1320px;top:528px;width:58.5px;height:205.5px;background:#fafafa;"></div>
<div class="r" style="left:1378px;top:528px;width:1px;height:205.5px;background:#e3e3e3;"></div>
<div class="r" style="left:1320px;top:535px;width:58.5px;height:31.5px;background:#e4f0fa;"></div>
<div class="r" style="left:1379px;top:535px;width:494px;height:31.5px;background:#f2f8fd;"></div>
<div class="r" style="left:1390px;top:535px;width:409.5px;height:30px;background:#d7dde3;"></div>
<div class="t" style="left:1343.50px;top:540.31px;font-size:23.6px;line-height:23.6px;font-family:'Liberation Mono', monospace;color:#111;">1</div>
<div class="t" style="left:1390.5px;top:540.11px;font-size:23.6px;line-height:23.6px;font-family:'Liberation Mono', monospace;color:#111;letter-spacing:-0.52px"><span style="color:#770088">select</span> * <span style="color:#770088">from</span> ny_hospital_data</div>
<div class="r" style="left:1320px;top:733px;width:553px;height:1px;background:#dcdcdc;"></div>
<div class="r" style="left:1320px;top:734px;width:553px;height:69.5px;background:#fafafa;"></div>
<div class="r" style="left:1320px;top:803px;width:553px;height:1px;background:#dcdcdc;"></div>
<div class="t" style="left:1342.00px;top:758.42px;font-size:21px;line-height:21px;font-family:'Liberation Sans', sans-serif;color:#111;letter-spacing:0.658px;-webkit-text-stroke:0.35px #111;">Console</div>
<div class="r" style="left:1638px;top:749px;width:88px;height:42px;background:#ebebeb;border-radius:6px;"></div>
<svg class="r" style="left:1654px;top:764px;" width="14" height="15" viewBox="0 0 14 15" fill="none"><path d="M1.5 1 L12 7.3 L1.5 13.7 Z" fill="#111"/></svg>
<div class="t" style="left:1677.00px;top:760.12px;font-size:21px;line-height:21px;font-family:'Liberation Sans', sans-serif;color:#111;letter-spacing:-0.513px;-webkit-text-stroke:0.35px #111;">Run</div>
<div class="r" style="left:1740px;top:749px;width:119px;height:42px;background:#ebebeb;border-radius:6px;"></div>
<svg class="r" style="left:1753px;top:765px;" width="19" height="14" viewBox="0 0 19 14" fill="none"><path d="M1 1 L8.5 6.8 L1 12.6 Z M8.5 1 L16.5 6.8 L8.5 12.6 Z" fill="#111"/></svg>
<div class="t" style="left:1779.00px;top:760.12px;font-size:21px;line-height:21px;font-family:'Liberation Sans', sans-serif;color:#111;letter-spacing:0.410px;-webkit-text-stroke:0.35px #111;">Run All</div>
<div class="t" style="left:1342px;top:827.36px;font-size:23.6px;line-height:32.3px;font-family:'Liberation Mono', monospace;color:#707070;white-space:pre;letter-spacing:-0.52px">Press Ctrl+Enter to execute
query...</div>
<div class="r" style="left:1856px;top:809px;width:12px;height:75px;background:#c1c1c1;border-radius:6px;"></div>
<div class="r" style="left:416px;top:78px;width:336px;height:880px;background:#ffffff;border-radius:7px;box-shadow:0 3px 10px rgba(0,0,0,0.13),0 0 4px rgba(0,0,0,0.10);"></div>
<div class="r" style="left:423px;top:85px;width:322px;height:62.5px;background:#edf5f8;border-radius:6px;"></div>
<div class="t" style="left:444.50px;top:105.48px;font-size:24px;line-height:24px;font-family:'Liberation Sans', sans-serif;color:#111;letter-spacing:0.053px;">Edit connected table</div>
<div class="t" style="left:444.50px;top:168.38px;font-size:24px;line-height:24px;font-family:'Liberation Sans', sans-serif;color:#2b2b2b;letter-spacing:0.065px;">Manage columns</div>
<div class="t" style="left:444.50px;top:231.28px;font-size:24px;line-height:24px;font-family:'Liberation Sans', sans-serif;color:#2b2b2b;letter-spacing:0.062px;">Pivot</div>
<div class="t" style="left:444.50px;top:294.18px;font-size:24px;line-height:24px;font-family:'Liberation Sans', sans-serif;color:#2b2b2b;letter-spacing:0.068px;">Sort</div>
<div class="t" style="left:444.50px;top:357.08px;font-size:24px;line-height:24px;font-family:'Liberation Sans', sans-serif;color:#2b2b2b;letter-spacing:0.056px;">Cut table</div>
<div class="t" style="left:444.50px;top:419.98px;font-size:24px;line-height:24px;font-family:'Liberation Sans', sans-serif;color:#2b2b2b;letter-spacing:0.059px;">Copy table</div>
<div class="t" style="left:444.50px;top:482.88px;font-size:24px;line-height:24px;font-family:'Liberation Sans', sans-serif;color:#2b2b2b;letter-spacing:0.056px;">Explode table</div>
<div class="t" style="left:444.50px;top:545.78px;font-size:24px;line-height:24px;font-family:'Liberation Sans', sans-serif;color:#2b2b2b;letter-spacing:0.062px;">Remove table</div>
<div class="t" style="left:444.50px;top:608.68px;font-size:24px;line-height:24px;font-family:'Liberation Sans', sans-serif;color:#2b2b2b;letter-spacing:0.056px;">Export to</div>
<svg class="r" style="left:708px;top:234px;" width="12" height="17" viewBox="0 0 12 17" fill="none"><path d="M2 2 L9 8.5 L2 15" stroke="#222" stroke-width="2.4" stroke-linecap="round" stroke-linejoin="round"/></svg>
<svg class="r" style="left:708px;top:612.5px;" width="12" height="17" viewBox="0 0 12 17" fill="none"><path d="M2 2 L9 8.5 L2 15" stroke="#222" stroke-width="2.4" stroke-linecap="round" stroke-linejoin="round"/></svg>
<div class="r" style="left:423px;top:659px;width:322px;height:2px;background:#dadada;"></div>
<div class="t" style="left:444.50px;top:688.58px;font-size:24px;line-height:24px;font-family:'Liberation Sans', sans-serif;color:#ababab;letter-spacing:0.067px;">Rename column</div>
<div class="t" style="left:444.50px;top:751.28px;font-size:24px;line-height:24px;font-family:'Liberation Sans', sans-serif;color:#2b2b2b;letter-spacing:0.053px;">Filter column</div>
<div class="t" style="left:444.50px;top:813.88px;font-size:24px;line-height:24px;font-family:'Liberation Sans', sans-serif;color:#2b2b2b;letter-spacing:0.062px;">Hide column</div>
<div class="r" style="left:423px;top:863px;width:322px;height:2px;background:#dadada;"></div>
<div class="t" style="left:444.50px;top:892.48px;font-size:24px;line-height:24px;font-family:'Liberation Sans', sans-serif;color:#2b2b2b;letter-spacing:0.062px;">Copy as image</div>
</body></html>
